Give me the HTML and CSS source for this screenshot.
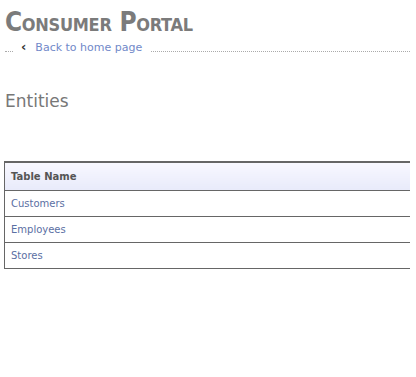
FILE: index.html
```html
<!DOCTYPE html>
<html>
<head>
<meta charset="utf-8">
<link rel="stylesheet" href="styles.css">
</head>
<body>
<div class="page">
  <h1 class="title">Consumer Portal</h1>
  <div class="crumbs">
    <span class="dots-left"></span>
    <span class="chev">&#8249;</span>
    <a class="back" href="#">Back to home page</a>
    <span class="dots-right"></span>
  </div>
  <h2 class="heading">Entities</h2>
  <table class="grid">
    <thead>
      <tr><th>Table Name</th></tr>
    </thead>
    <tbody>
      <tr><td><a href="#">Customers</a></td></tr>
      <tr><td><a href="#">Employees</a></td></tr>
      <tr><td><a href="#">Stores</a></td></tr>
    </tbody>
  </table>
</div>
</body>
</html>
```
FILE: styles.css
```css
html, body {
  margin: 0;
  padding: 0;
  background: #fff;
}
.page {
  padding: 0 0 0 4px;
  font-family: "DejaVu Sans", Verdana, sans-serif;
}
.title {
  margin: 0;
  padding: 9px 0 0 1px;
  font-family: "DejaVu Sans Condensed", "DejaVu Sans", sans-serif;
  font-stretch: condensed;
  font-size: 26px;
  line-height: 26px;
  font-weight: bold;
  font-variant: small-caps;
  color: #7b7b7b;
  letter-spacing: -0.3px;
}
.crumbs {
  display: flex;
  align-items: center;
  height: 16px;
  margin-top: 4px;
  padding-right: 6px;
}
.dots-left {
  width: 8px;
  border-bottom: 1px dotted #aaa;
  align-self: flex-end;
  margin-bottom: 3px;
  margin-left: 1px;
}
.chev {
  margin-left: 8px;
  font-size: 13px;
  color: #333;
  font-weight: bold;
  line-height: 16px;
}
.back {
  margin-left: 9px;
  font-size: 11px;
  color: #7189c9;
  text-decoration: none;
}
.dots-right {
  flex: 1;
  border-bottom: 1px dotted #aaa;
  align-self: flex-end;
  margin-bottom: 3px;
  margin-left: 9px;
}
.heading {
  margin: 36px 0 0 1px;
  font-size: 17px;
  line-height: 20px;
  font-weight: normal;
  color: #777;
}
.grid {
  margin-top: 50px;
  width: 406px;
  border-collapse: collapse;
  font-size: 10px;
}
.grid th {
  height: 27px;
  padding: 0 6px;
  text-align: left;
  font-weight: bold;
  color: #555;
  background: linear-gradient(#f8f8ff, #e8eafa);
  border-top: 2px solid #666;
  border-bottom: 1px solid #666;
  border-left: 1px solid #666;
}
.grid td {
  height: 25px;
  padding: 0 6px;
  border-bottom: 1px solid #666;
  border-left: 1px solid #666;
}
.grid td a {
  color: #5b6fa3;
  text-decoration: none;
}
```
